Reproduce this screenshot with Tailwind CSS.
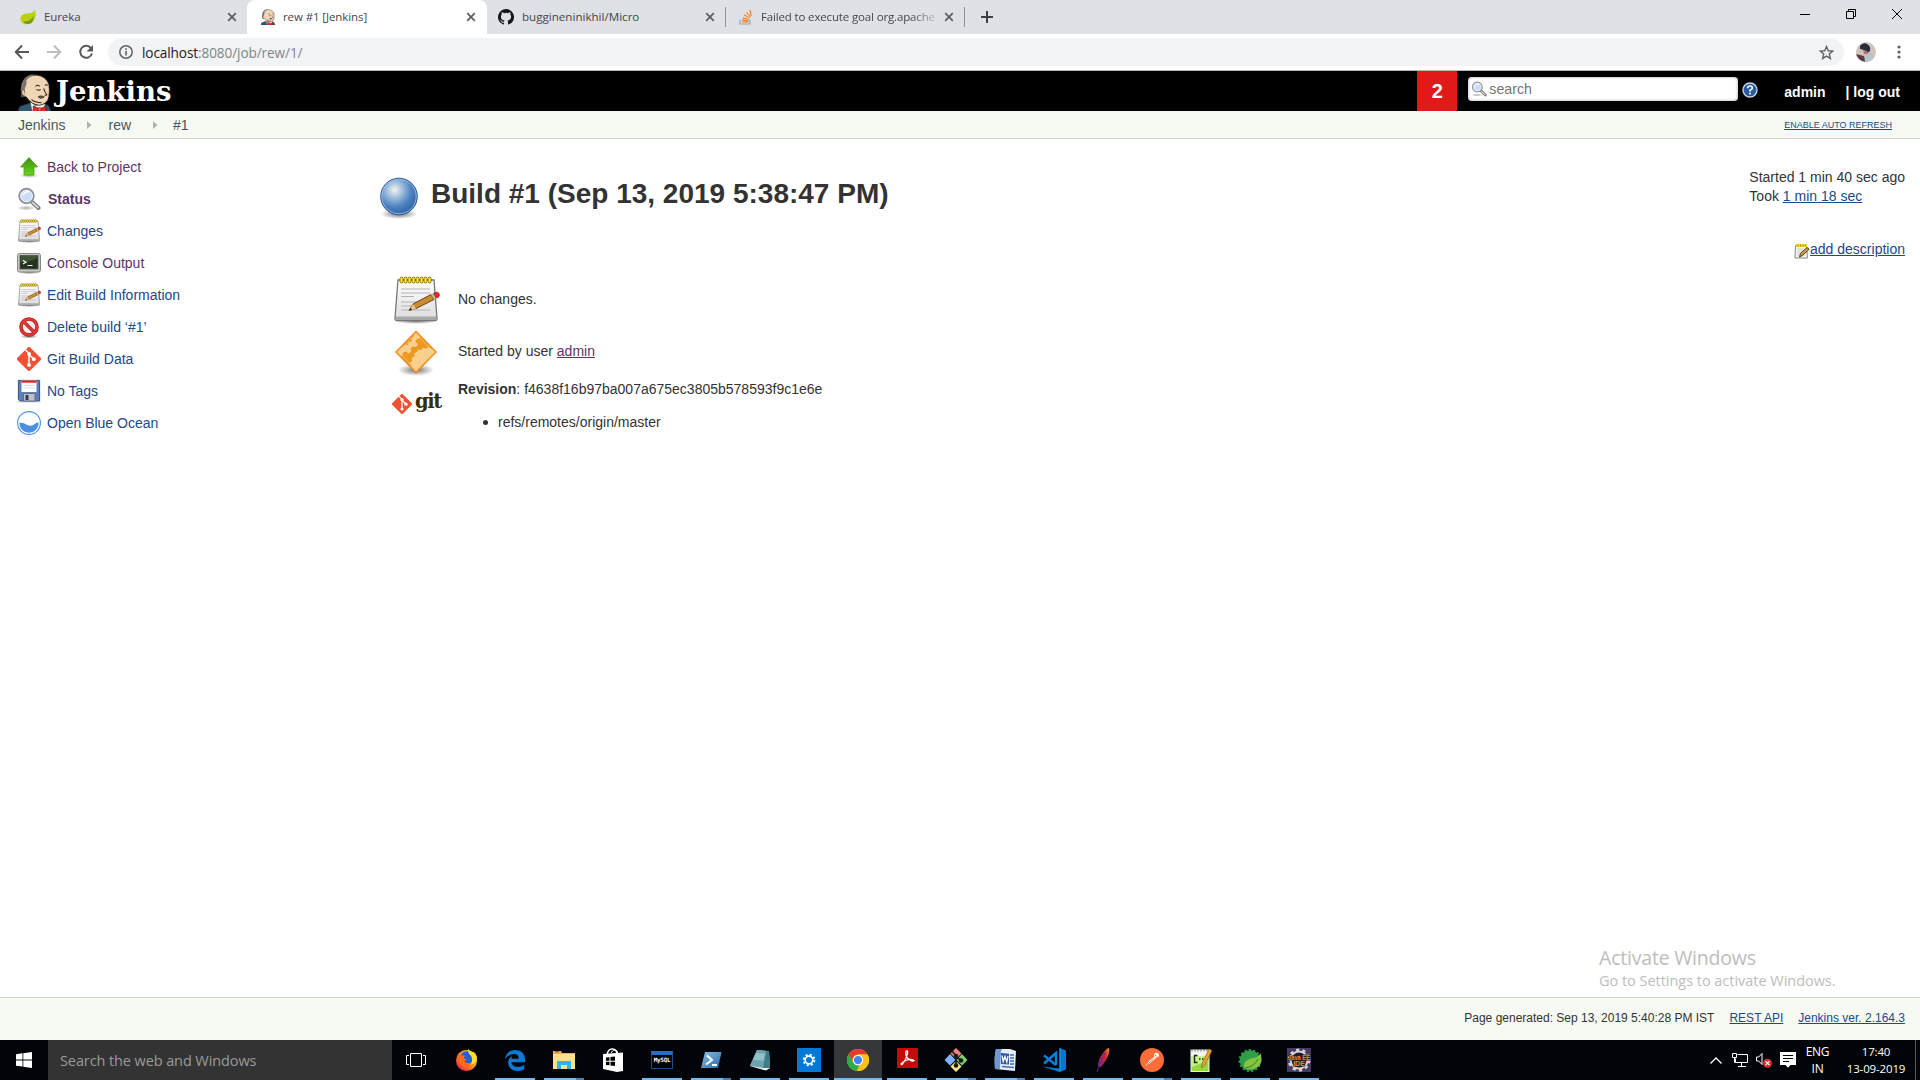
<!DOCTYPE html>
<html lang="en">
<head>
<meta charset="utf-8">
<title>rew #1 [Jenkins]</title>
<script src="https://cdn.jsdelivr.net/npm/@tailwindcss/browser@4"></script>
</head>
<body class="w-[1920px] h-[1080px] overflow-hidden bg-white flex flex-col font-['Liberation_Sans',sans-serif] text-sm text-[#333] relative">

<svg class="absolute w-0 h-0">
  <defs>
    <linearGradient id="gGreen" x1="0" y1="0" x2="0" y2="1"><stop offset="0" stop-color="#3f8f12"/><stop offset="1" stop-color="#66d416"/></linearGradient>
    <linearGradient id="gPaper" x1="0" y1="0" x2="0" y2="1"><stop offset="0" stop-color="#fff"/><stop offset="1" stop-color="#dcdcdc"/></linearGradient>
    <radialGradient id="gBall" cx=".38" cy=".32" r=".75"><stop offset="0" stop-color="#f4f5e6"/><stop offset=".2" stop-color="#b9cee4"/><stop offset=".6" stop-color="#4f85c2"/><stop offset="1" stop-color="#2a5a9c"/></radialGradient>
    <radialGradient id="gShade"><stop offset="0" stop-color="#000" stop-opacity=".55"/><stop offset="1" stop-color="#000" stop-opacity="0"/></radialGradient>
    <linearGradient id="gFox" x1="1" y1="0" x2="0" y2="1"><stop offset="0" stop-color="#fff04a"/><stop offset=".45" stop-color="#ff9518"/><stop offset=".8" stop-color="#ff3a3c"/><stop offset="1" stop-color="#e31587"/></linearGradient>
    <linearGradient id="gPs" x1="0" y1="0" x2="1" y2="1"><stop offset="0" stop-color="#8cc0e4"/><stop offset="1" stop-color="#2467a5"/></linearGradient>
    <linearGradient id="gFeather" x1="1" y1="0" x2="0" y2="1"><stop offset="0" stop-color="#f99322"/><stop offset=".4" stop-color="#d32438"/><stop offset="1" stop-color="#6d2a86"/></linearGradient>
  </defs>
  <symbol id="x" viewBox="0 0 10 10"><path d="M1.2 1.2l7.6 7.6M8.8 1.2L1.2 8.8" stroke="#5a5e62" stroke-width="1.7" fill="none"/></symbol>
  <symbol id="note" viewBox="0 0 48 48">
    <ellipse cx="24" cy="45" rx="22" ry="3" fill="url(#gShade)"/>
    <path d="M6 4h36l3 38.5q0 2-2 2H5q-2 0-2-2z" fill="url(#gPaper)" stroke="#777" stroke-width="1.3"/>
    <path d="M4 40.5h40l.4 3.5H3.6z" fill="#a9a9a9"/>
    <path d="M9 13h29M9 17h29M9 20.500h13M9 26h24M9 30h18M9 34h29" stroke="#b4b4b4" stroke-width="1.200"/>
    <g fill="#ffe83c" stroke="#8b7500" stroke-width="1"><rect x="8" y="1" width="3" height="6" rx="1.500"/><rect x="12" y="1" width="3" height="6" rx="1.500"/><rect x="16" y="1" width="3" height="6" rx="1.500"/><rect x="20" y="1" width="3" height="6" rx="1.500"/><rect x="24" y="1" width="3" height="6" rx="1.500"/><rect x="28" y="1" width="3" height="6" rx="1.500"/><rect x="32" y="1" width="3" height="6" rx="1.500"/><rect x="36" y="1" width="3" height="6" rx="1.500"/></g>
    <path d="M17 34.500l4-6.500 18-9.500 3 5-18 9z" fill="#c98c32" stroke="#6f4205" stroke-width="1"/>
    <path d="M17 34.500l4-6.500 3 5z" fill="#e8c890"/><path d="M17 34.500l1.700-2.700 1.300 2z" fill="#222"/>
    <path d="M39 18.500l2.500-1.200 3 5-2.500 1.200z" fill="#b5b5a9"/><path d="M41.500 17.300q4.500-2.500 5.700.5t-2.700 4.500z" fill="#ef2929" stroke="#a40000" stroke-width=".6"/>
  </symbol>
  <symbol id="gitmark" viewBox="0 0 24 24"><path d="M10.800.5a1.700 1.700 0 012.400 0l10.300 10.300a1.700 1.700 0 010 2.400L13.200 23.500a1.700 1.700 0 01-2.400 0L.5 13.200a1.700 1.700 0 010-2.400z" fill="#f05133"/><path d="M8.500 2.800L12 6.500V18M12 7.200l4.500 4.800" stroke="#fff" stroke-width="1.500" fill="none"/><circle cx="12" cy="6.800" r="1.900" fill="#fff"/><circle cx="12" cy="18" r="1.900" fill="#fff"/><circle cx="16.800" cy="12.200" r="1.900" fill="#fff"/></symbol>
  <symbol id="butler" viewBox="0 0 32 37">
    <path d="M0 37q0-6 5-6.500l9-3 13 2q4 1 5 7.500z" fill="#34586e" stroke="#1b2b35" stroke-width="1"/>
    <path d="M12 27l5 4 9-2-1 8H14z" fill="#f3f1ee"/>
    <path d="M4 22Q1 15 5 7 10 1 18 1q9 1 12 9 1 6 0 12-1 7-9 8.500-8-.5-13-8z" fill="#f0d6b7" stroke="#302018" stroke-width=".8"/>
    <path d="M17 .5Q9-.5 5 6 2 11 3.500 17l-.5 6 4-3-.5-6Q9 10 8 6q4-4 9-5.500z" fill="#7b7471"/>
    <path d="M5 15q-2.500 1-1.500 4t4 3" fill="#edc9a4" stroke="#302018" stroke-width=".8"/>
    <path d="M17 12q2-2 4 0M26 11q2-1 3 0M18 15q2 1.500 4 0M25 14q1 4 3 6-1 1-2 .5M13 25q4 3 10 3" fill="none" stroke="#302018" stroke-width="1"/>
    <path d="M19 22q3-2 7 0-1 2-2.500 1.500-3 1.500-4.500-1.500z" fill="#5a4a42"/>
    <path d="M15 31l6 3 6-2.500.5 5.500H14.500z" fill="#e12a2a" stroke="#7a0d10" stroke-width=".7"/><circle cx="21" cy="34.500" r="1.800" fill="#f55" stroke="#7a0d10" stroke-width=".6"/>
  </symbol>
  <symbol id="lens" viewBox="0 0 24 24"><ellipse cx="9" cy="21" rx="9" ry="2.500" fill="url(#gShade)" opacity=".6"/><path d="M14 14l7.500 7" stroke="#777" stroke-width="4" stroke-linecap="round"/><path d="M15.500 15.500l5.500 5" stroke="#d6d6d6" stroke-width="1.800" stroke-linecap="round"/><circle cx="9.500" cy="9" r="7.200" fill="#bcd6f2" stroke="#8f9296" stroke-width="2"/><circle cx="9.500" cy="9" r="5.800" fill="#c9def5" stroke="#eef5fc" stroke-width="1"/><path d="M6 8q2-4 6-3" stroke="#fff" stroke-width="1.500" fill="none"/></symbol>
</svg>

<!-- Browser tab strip -->
<div class="h-[34px] shrink-0 bg-[#dee1e6] flex items-stretch font-['Open_Sans',sans-serif] text-[#44474b]">
  <div class="w-[247px] pl-5 pr-[10px] flex items-center">
    <svg class="w-4 h-4" viewBox="0 0 16 16"><path d="M15 1q2 7-1.500 11T4 15Q0 13 .5 9T6 4.500Q12 5 15 1z" fill="#bccf10"/><path d="M3 12.500Q10 13 13.500 7q.5 7-5 8-3.500.5-5.500-2.500z" fill="#7c9a10"/></svg>
    <span class="ml-2 flex-1 text-[11.5px] tracking-[-0.1px]">Eureka</span>
    <svg class="w-[10px] h-[10px]"><use href="#x"/></svg>
  </div>
  <div class="w-[240px] pl-[13px] pr-[11px] flex items-center bg-white rounded-t-lg">
    <svg class="w-4 h-4"><use href="#butler"/></svg>
    <span class="ml-[7px] flex-1 text-[11.5px] tracking-[-0.1px]">rew #1 [Jenkins]</span>
    <svg class="w-[10px] h-[10px]"><use href="#x"/></svg>
  </div>
  <div class="w-[238px] pl-[11px] pr-[10px] flex items-center">
    <svg class="w-4 h-4" viewBox="0 0 16 16" fill="#15171a"><path d="M8 0a8 8 0 00-2.530 15.590c.4.070.55-.170.550-.380v-1.490c-2.230.480-2.700-.950-2.700-.950-.360-.920-.890-1.170-.890-1.170-.730-.5.060-.490.060-.490.800.06 1.230.830 1.230.830.710 1.220 1.870.870 2.330.660.070-.520.280-.870.510-1.070-1.780-.2-3.640-.890-3.640-3.950 0-.870.310-1.590.820-2.150-.080-.2-.360-1.020.080-2.120 0 0 .670-.220 2.200.820a7.700 7.700 0 014 0c1.530-1.040 2.200-.820 2.200-.820.440 1.100.160 1.920.080 2.120.510.560.820 1.270.820 2.150 0 3.070-1.870 3.750-3.650 3.950.290.250.540.730.540 1.480v2.200c0 .210.150.460.550.380A8 8 0 008 0z"/></svg>
    <span class="ml-2 flex-1 text-[11.6px]">buggineninikhil/Micro</span>
    <svg class="w-[10px] h-[10px]"><use href="#x"/></svg>
  </div>
  <div class="w-px h-5 bg-[#8d9094] self-center"></div>
  <div class="w-[238px] pl-3 pr-[10px] flex items-center">
    <svg class="w-4 h-4" viewBox="0 0 16 16" fill="none"><path d="M2 10.500V15h10v-4.500" stroke="#9aa4ae" stroke-width="1.200"/><path d="M4 13h6.500M4 11.200l6.500.6M4.600 8.800l6.200 1.700M6 5.700l5.500 3.200M8.500 3l4 5M11.800.8l1.500 6" stroke="#f48024" stroke-width="1.200"/></svg>
    <span class="ml-[7px] whitespace-nowrap text-[11.5px] tracking-[-0.15px] [mask-image:linear-gradient(to_right,black_86%,transparent_104%)]">Failed to execute goal org.apache</span>
    <svg class="w-[10px] h-[10px] ml-auto shrink-0"><use href="#x"/></svg>
  </div>
  <div class="w-px h-5 bg-[#8d9094] self-center"></div>
  <div class="flex-1 flex items-center pl-4">
    <svg class="w-3 h-3" viewBox="0 0 12 12"><path d="M6 0v12M0 6h12" stroke="#3c4043" stroke-width="2"/></svg>
  </div>
  <div class="flex items-start gap-9 pt-[9px] pr-[18px]">
    <svg class="w-[10px] h-[10px]" viewBox="0 0 10 10"><path d="M0 5.500h10" stroke="#000"/></svg>
    <svg class="w-[10px] h-[10px]" viewBox="0 0 10 10" fill="none" stroke="#000"><path d="M.5 2.500h7v7h-7zM2.500 2.500v-2h7v7h-2"/></svg>
    <svg class="w-[10px] h-[10px]" viewBox="0 0 10 10"><path d="M0 0l10 10M10 0L0 10" stroke="#000"/></svg>
  </div>
</div>

<!-- Browser toolbar -->
<div class="h-9 shrink-0 flex items-center pl-[14px] pr-[17px] font-['Open_Sans',sans-serif]">
  <svg class="w-4 h-4" viewBox="0 0 16 16" fill="none" stroke="#55595d" stroke-width="2"><path d="M15 8H2M8 1.500L1.800 8 8 14.500"/></svg>
  <svg class="w-4 h-4 ml-4" viewBox="0 0 16 16" fill="none" stroke="#bcbec0" stroke-width="2"><path d="M1 8h13M8 1.500L14.200 8 8 14.500"/></svg>
  <svg class="w-4 h-4 ml-4" viewBox="0 0 16 16"><path d="M13.300 4.500A6 6 0 1014 9.500" fill="none" stroke="#55595d" stroke-width="2"/><path d="M15 1v6.500H8.500z" fill="#55595d"/></svg>
  <div class="ml-[14px] w-[1736px] h-7 rounded-full bg-[#f1f3f4] flex items-center pl-[11px] pr-[10px]">
    <svg class="w-[14px] h-[14px]" viewBox="0 0 14 14"><circle cx="7" cy="7" r="6.200" fill="none" stroke="#5f6368" stroke-width="1.500"/><path d="M7 6v4.500M7 3.300v1.600" stroke="#5f6368" stroke-width="1.600"/></svg>
    <span class="ml-[9px] mt-px flex-1 text-[13.6px] tracking-[-0.1px] text-[#80868b]"><span class="text-[#202124]">localhost</span>:8080/job/rew/1/</span>
    <svg class="w-[15px] h-[15px]" viewBox="0 0 24 24" fill="none" stroke="#5f6368" stroke-width="2.200"><path d="M12 2.500l2.800 6.700 7.200.6-5.500 4.700 1.700 7L12 17.700 5.800 21.500l1.700-7L2 9.800l7.200-.6z"/></svg>
  </div>
  <svg class="w-5 h-5 ml-3" viewBox="0 0 20 20"><clipPath id="av"><circle cx="10" cy="10" r="10"/></clipPath><g clip-path="url(#av)"><path d="M0 0h20v20H0z" fill="#cfc4bb"/><path d="M0 12l8 2 4 6H0z" fill="#5e3c44"/><path d="M8 12q2-3 6-3 4 3 3 11H9z" fill="#b9c3c8"/><path d="M4 4q3-4 7-2 4 2 3 7l-3 2-3-3-4-1z" fill="#2a2b3f"/><path d="M7 8l4 1 1 3-4 0z" fill="#b0746c"/></g></svg>
  <svg class="w-1 h-[14px] ml-[21px]" viewBox="0 0 4 14" fill="#5f6368"><circle cx="2" cy="2" r="1.600"/><circle cx="2" cy="7" r="1.600"/><circle cx="2" cy="12" r="1.600"/></svg>
</div>

<!-- Jenkins header -->
<div class="h-[41px] shrink-0 bg-black border-t border-[#b6bcb6] flex">
  <div class="flex pl-[18px] flex-1">
    <svg class="w-[33px] h-[38px] mt-[3px]"><use href="#butler"/></svg>
    <span class="ml-[5px] mt-px text-[27.5px] leading-[38px] font-bold text-white font-['DejaVu_Serif',serif]">Jenkins</span>
  </div>
  <div class="w-10 bg-[#e11919] text-white font-bold text-xl flex items-center justify-center">2</div>
  <div class="ml-[11px] mt-[6px] w-[270px] h-6 rounded bg-white shadow-[inset_0_0_3px_#999] flex items-center pl-[3px]">
    <svg class="w-4 h-4"><use href="#lens"/></svg>
    <span class="ml-[2px] text-[#757575] text-[14.2px]">search</span>
  </div>
  <svg class="w-4 h-4 ml-1 mt-[11px]" viewBox="0 0 16 16"><circle cx="8" cy="8" r="7" fill="#2c5aa0" stroke="#c5d5e8" stroke-width="1.400"/><path d="M5.600 6.200Q5.800 4 8 4t2.300 2Q10.300 7.300 8 8.300v1.200" stroke="#fff" stroke-width="1.600" fill="none"/><circle cx="8" cy="11.600" r="1" fill="#fff"/></svg>
  <div class="ml-[26px] mt-[2px] flex items-center text-white font-bold text-sm pr-5 whitespace-nowrap">
    <span>admin</span><span class="ml-5">| log out</span>
  </div>
</div>

<!-- Breadcrumbs -->
<div class="h-7 shrink-0 bg-[#f6faf2] border-b border-[#d3d7cf] flex items-center pl-[18px] pr-[28px] text-[#4d545d] text-sm">
  <span>Jenkins</span>
  <svg class="w-[5px] h-2 ml-[22px]" viewBox="0 0 5 8"><path d="M0 0l4.500 4L0 8z" fill="#b0b3b0"/></svg>
  <span class="ml-4">rew</span>
  <svg class="w-[5px] h-2 ml-[22px]" viewBox="0 0 5 8"><path d="M0 0l4.500 4L0 8z" fill="#b0b3b0"/></svg>
  <span class="ml-[15px]">#1</span>
  <a class="ml-auto mt-px text-[9px] underline text-[#204a87]">ENABLE AUTO REFRESH</a>
</div>

<!-- Page body -->
<div class="h-[858px] shrink-0 flex">
  <nav class="w-[380px] pl-[17px] pt-3 flex flex-col text-[#204a87]">
    <a class="h-8 flex items-center gap-[6px] text-[#5c3566]"><svg class="w-6 h-6" viewBox="0 0 24 24"><ellipse cx="12" cy="20.500" rx="10" ry="2.500" fill="url(#gShade)" opacity=".6"/><path d="M12 2.500l8.500 9.500H17v8H7v-8H3.500z" fill="url(#gGreen)" stroke="#4c9a22" stroke-width=".8"/></svg>Back to Project</a>
    <a class="h-8 flex items-center gap-[7px] text-[#5c3566] font-bold"><svg class="w-6 h-6"><use href="#lens"/></svg>Status</a>
    <a class="h-8 flex items-center gap-[6px]"><svg class="w-6 h-6"><use href="#note"/></svg>Changes</a>
    <a class="h-8 flex items-center gap-[6px] text-[#5c3566]"><svg class="w-6 h-6" viewBox="0 0 24 24"><ellipse cx="12" cy="21" rx="11" ry="2.500" fill="url(#gShade)"/><rect x=".5" y="2.500" width="23" height="18.500" rx="2" fill="#c4c7c0" stroke="#888a85"/><rect x="3" y="4.500" width="18" height="13.500" fill="#24331f" stroke="#555" stroke-width=".8"/><path d="M3.500 11q8 1 17-4V5h-17z" fill="#3f5536"/><path d="M6 9.500l3 1.700-3 1.700M10.500 14.500h5" stroke="#fff" stroke-width="1.100" fill="none"/></svg>Console Output</a>
    <a class="h-8 flex items-center gap-[6px]"><svg class="w-6 h-6"><use href="#note"/></svg>Edit Build Information</a>
    <a class="h-8 flex items-center gap-[6px]"><svg class="w-6 h-6" viewBox="0 0 24 24"><ellipse cx="12" cy="21.500" rx="9" ry="2" fill="url(#gShade)"/><circle cx="12" cy="12" r="8" fill="#f7eeee" stroke="#b91a1a" stroke-width="3.600"/><path d="M6.500 6.500l11 11" stroke="#b91a1a" stroke-width="3.200"/><circle cx="12" cy="12" r="8" fill="none" stroke="#dd3a3a" stroke-width="2.200"/><path d="M6.500 6.500l11 11" stroke="#dd3a3a" stroke-width="2"/></svg>Delete build ‘#1’</a>
    <a class="h-8 flex items-center gap-[6px]"><svg class="w-6 h-6"><use href="#gitmark"/></svg>Git Build Data</a>
    <a class="h-8 flex items-center gap-[6px]"><svg class="w-6 h-6" viewBox="0 0 24 24"><path d="M0 0h24v24H0z" fill="#ebebed"/><path d="M1.500 1.500h21v20.500H3L1.500 20.500z" fill="#5b82bd" stroke="#3a5a8c"/><path d="M4.500 1.500h15v11.500h-15z" fill="#fff"/><path d="M4.500 1.500h15v2.200h-15z" fill="#e02020"/><path d="M6 6.500h12M6 9h12" stroke="#dde"/><path d="M6.500 14.500H18V22H6.500z" fill="#bfc1c4" stroke="#4a5a72" stroke-width=".7"/><path d="M8.500 16h3v5h-3z" fill="#333c4c"/></svg>No Tags</a>
    <a class="h-8 flex items-center gap-[6px]"><svg class="w-6 h-6" viewBox="0 0 24 24"><circle cx="12" cy="12" r="11.400" fill="#fff" stroke="#4a90e2" stroke-width="1.100"/><path d="M2.300 11.500q5 0 8 2.500 4 2 8-1.500 1.500-1 3.400-1A9.700 9.700 0 0112 21.700 9.700 9.700 0 012.300 11.500z" fill="#4a90e2"/></svg>Open Blue Ocean</a>
  </nav>

  <main class="flex-1 pt-[35px]">
    <h1 class="flex items-center h-10 text-[28px] font-bold leading-10 whitespace-nowrap">
      <svg class="w-[38px] h-[42px] mt-2 shrink-0" viewBox="0 0 38 42"><ellipse cx="19" cy="37" rx="18.500" ry="5" fill="url(#gShade)"/><circle cx="19" cy="19.500" r="18.300" fill="url(#gBall)" stroke="#2d5a9a"/><circle cx="19" cy="19.500" r="17.200" fill="none" stroke="#9dbce0" stroke-width=".9"/></svg>
      <span class="ml-[13px]">Build #1 (Sep 13, 2019 5:38:47 PM)</span>
    </h1>
    <div class="mt-[59px] flex flex-col pl-3">
      <div class="h-[52px] flex items-center">
        <svg class="w-12 h-12 mt-px"><use href="#note"/></svg>
        <span class="ml-[18px]">No changes.</span>
      </div>
      <div class="h-[52px] flex items-center">
        <svg class="w-12 h-12 mt-px" viewBox="0 0 48 48"><clipPath id="dia"><path d="M24 3.500L44 24 24 44.500 4 24z"/></clipPath><ellipse cx="24" cy="42" rx="18" ry="6" fill="url(#gShade)"/><path d="M24 3.500L44 24 24 44.500 4 24z" fill="#fbcf8c"/><g clip-path="url(#dia)"><path d="M0 0h24l.5 4.500-3 1 .5 3.500-2.500 1 .2 3.500-3 .3-.8 3.200-3-.5-2 2.500-2.500-1.500L0 21z" fill="#e8951c"/><path d="M26 0l-.5 6 3 1.500-.5 3-3.500.5-1 3 2.500 2.300-2 2.700-3-.8-2.500 2.300.8 3-2.800 2-2.500-2-3 1-.5 3.200-3 .5L6 26l-4-1v2l14 12 3-1.500-1-3 2.200-1.500-.5-3.300 2.800-1.200-.3-3 3-1.500.8-2.500 3.500.5 1.500-2.500 3 1.200 2.500-2 2.500 2 3-.8L46 24V0z" fill="#ec9a24"/></g><path d="M24 3.500L44 24 24 44.500 4 24z" fill="none" stroke="#f0881c" stroke-width="1.400"/><path d="M24 5.500L42 24 24 42.500 6 24z" fill="none" stroke="#fdc77e" stroke-width=".7"/></svg>
        <span class="ml-[18px]">Started by user <a class="text-[#5c3566] underline">admin</a></span>
      </div>
      <div class="flex">
        <div class="w-12 pt-[14px] flex items-center h-10 font-['DejaVu_Serif',serif]">
          <svg class="w-5 h-5 shrink-0"><use href="#gitmark"/></svg><span class="ml-[3px] -mt-1 text-[19.5px] leading-5 font-bold text-[#3a2d08] tracking-[-1.4px]">git</span>
        </div>
        <div class="ml-[18px] pt-[2px] leading-5">
          <p><b>Revision</b>: f4638f16b97ba007a675ec3805b578593f9c1e6e</p>
          <ul class="mt-[13px] pl-[25px]"><li class="flex items-center"><span class="w-[5px] h-[5px] rounded-full bg-[#333] mr-[10px]"></span>refs/remotes/origin/master</li></ul>
        </div>
      </div>
    </div>
  </main>

  <aside class="w-[200px] pr-[15px] pt-[29px] flex flex-col items-end leading-[19px] whitespace-nowrap">
    <div><p>Started 1 min 40 sec ago</p><p>Took <a class="underline text-[#204a87]">1 min 18 sec</a></p></div>
    <a class="mt-[34px] flex items-center text-[#204a87] underline"><svg class="w-4 h-4 mt-[3px]" viewBox="0 0 16 16"><path d="M1.500 2.500h11l1 12.500H1z" fill="#f2f2ef" stroke="#8a8c88"/><path d="M3.500 6h7M3.500 8h7M3.500 10h4M3.500 12h7" stroke="#c4c4c4" stroke-width=".8"/><path d="M2 1h11v3H2z" fill="#f0d830"/><path d="M4 1v3M6.500 1v3M9 1v3M11.500 1v3" stroke="#a88c10" stroke-width=".7"/><path d="M5.500 14l1-3.500 6.500-6 2.200 1.800-6.500 6z" fill="#c99a48" stroke="#4a3208" stroke-width=".9"/></svg>add description</a>
  </aside>
</div>

<!-- Page footer -->
<footer class="h-[43px] shrink-0 bg-[#f6faf2] border-t border-[#d3d7cf] flex items-center justify-end gap-[15px] pr-[15px] pb-[2px] text-xs">
  <span>Page generated: Sep 13, 2019 5:40:28 PM IST</span>
  <a class="underline text-[#204a87]">REST API</a>
  <a class="underline text-[#204a87]">Jenkins ver. 2.164.3</a>
</footer>

<!-- Windows taskbar -->
<div class="h-10 shrink-0 bg-[#010409] flex font-['Open_Sans',sans-serif]">
  <div class="w-12 flex items-center justify-center"><svg class="w-4 h-4" viewBox="0 0 16 16" fill="#fff"><path d="M0 2.200l6.500-.9v6.200H0zM7.300 1.200L16 0v7.500H7.300zM0 8.400h6.500v6.200L0 13.700zM7.300 8.400H16V16l-8.700-1.200z"/></svg></div>
  <div class="w-[344px] bg-[#333] text-[#9a9a9a] text-[14.500px] tracking-[-0.1px] flex items-center pl-3 pt-[2px]">Search the web and Windows</div>
  <div class="w-12 flex items-center justify-center mr-[2px]"><svg class="w-5 h-[14px]" viewBox="0 0 20 14" fill="none" stroke="#fff"><path d="M4.500.5h11v13h-11zM3 2.500H.5v9H3M17 2.500h2.500v9H17"/></svg></div>

  <div class="flex gap-px">
  <div class="w-12 flex items-center justify-center"><svg class="w-[23px] h-6" viewBox="0 0 24 24"><circle cx="12" cy="12.500" r="11" fill="url(#gFox)"/><path d="M7 5q3-3 8-2 5 3 3.500 9-1.500 5-6.500 5-5-1-6-7z" fill="#1a62d6"/><path d="M3 5l4 2.500 3-.5-.5 3.500 3 1-3 2 3 1.500q3 .5 5-1-1.500 5-7 5.500-6-1.500-8-8z" fill="#ff6a1c"/><path d="M14 0q-1 5 3 8 2 5-1 9 6-1 7-8-1-4-4-6l-1 1q-3-1-4-4z" fill="#ffe030"/></svg></div>
  <div class="w-12 flex items-center justify-center relative"><svg class="w-[22px] h-[22px]" viewBox="0 0 24 24"><path d="M1 11Q3 1 12.500 1 23 1.500 23 12v2.500H8q1 5 7 5 4 0 7-2v4.500q-3 2-8 2-9-1-9.500-9Q4.500 10 9 7.500 8 9 8 10.500h8q0-5-5-5Q5 5.500 1 11z" fill="#0a7ad8"/></svg><i class="absolute bottom-0 w-10 h-0.5 bg-[#76b9ed]"></i></div>
  <div class="w-12 flex items-center justify-center relative"><svg class="w-[22px] h-5" viewBox="0 0 22 20"><path d="M0 1h8l1 2h13v16H0z" fill="#e8b64c"/><path d="M0 4h22v15H0z" fill="#ffe08a"/><path d="M4 19v-8h14v8h-4v-4H8v4z" fill="#2eb4ee"/><path d="M2 1h4v1.500H2z" fill="#a86a10"/></svg><i class="absolute bottom-0 w-10 h-0.5 bg-[#76b9ed] border-r-8 border-[#4f80ad]"></i></div>
  <div class="w-12 flex items-center justify-center"><svg class="w-[22px] h-6" viewBox="0 0 22 24"><path d="M5 7q1-6 5-6t5 4" fill="none" stroke="#fff" stroke-width="1.500"/><path d="M9 5q3-5 6-2l1 3" fill="none" stroke="#fff"/><path d="M1 6l20-1.500V23l-6 1L1 21z" fill="#fff"/><path d="M4 9.500l3.500-.3v3.500H4zM8.500 9l4.500-.4v4.100H8.500zM4 13.800h3.500v3.500L4 17zM8.500 13.800H13v4.200l-4.500-.5z" fill="#000"/></svg></div>
  <div class="w-12 flex items-center justify-center relative"><span class="w-[22px] h-[18px] border border-[#1d4a8a] border-t-4 border-t-[#2a6cc0] bg-black text-white text-[6px] leading-[9px] text-center font-bold font-['DejaVu_Sans_Mono',monospace] tracking-[-0.3px]">MySQL</span><i class="absolute bottom-0 w-10 h-0.5 bg-[#76b9ed]"></i></div>
  <div class="w-12 flex items-center justify-center relative"><svg class="w-[22px] h-[18px]" viewBox="0 0 22 18"><path d="M5 1h16.500L18 17H1z" fill="url(#gPs)"/><path d="M7 4.500l5 4.500-6 4.500M12 14h5" stroke="#fff" stroke-width="2" fill="none"/></svg><i class="absolute bottom-0 w-10 h-0.5 bg-[#76b9ed] border-r-8 border-[#4f80ad]"></i></div>
  <div class="w-12 flex items-center justify-center relative"><svg class="w-6 h-6" viewBox="0 0 24 24"><path d="M9 2l12 1 1 17-5 2L2 18z" fill="#a9ccd4"/><path d="M9 2l9 1-3 17L2 18z" fill="#6da3ad"/><path d="M8 5l9 .5-1.500 7L5 12z" fill="#93c1c9"/><path d="M18 3l-3 17 7 0-1-17z" fill="#3a7c88"/><path d="M2 18l13 2 7 0-4 2.500z" fill="#eee"/></svg><i class="absolute bottom-0 w-10 h-0.5 bg-[#76b9ed]"></i></div>
  <div class="w-12 flex items-center justify-center relative"><svg class="w-6 h-6" viewBox="0 0 24 24"><path d="M0 0h24v24H0z" fill="#0078d7"/><circle cx="12" cy="12" r="3.800" fill="none" stroke="#fff" stroke-width="1.700"/><circle cx="12" cy="12" r="5.300" fill="none" stroke="#fff" stroke-width="2" stroke-dasharray="2.080 2.080"/></svg><i class="absolute bottom-0 w-10 h-0.5 bg-[#76b9ed]"></i></div>
  <div class="w-12 bg-[#35383b] flex items-center justify-center relative"><svg class="w-[22px] h-[22px]" viewBox="0 0 24 24"><circle cx="12" cy="12" r="12" fill="#fbc116"/><path d="M1.600 6A12 12 0 0122.400 6H12a6 6 0 00-5.200 9z" fill="#e33b2e"/><path d="M1.600 6l5.200 9A6 6 0 0012 18l1.500-.2L10.500 24A12 12 0 011.600 6z" fill="#2da94f"/><path d="M22.400 6H12l5.200 3v6l-5.200 9A12 12 0 0022.400 6z" fill="#fbc116"/><circle cx="12" cy="12" r="5.600" fill="#fff"/><circle cx="12" cy="12" r="4.500" fill="#4285f4"/></svg><i class="absolute bottom-0 w-12 h-0.5 bg-[#76b9ed]"></i></div>
  <div class="w-12 flex items-center justify-center relative"><svg class="w-[21px] h-5 -mt-1" viewBox="0 0 21 20"><path d="M0 0h21v20H0z" fill="#c50a0a"/><path d="M4 16q2.500-3 6-4 4-1.500 7 .5-2 2-6-2-3-3-2-7 2-2 1.500 2Q9.500 11 5.500 16 4.500 17 4 16z" fill="none" stroke="#fff" stroke-width="1.300"/></svg><i class="absolute bottom-0 w-10 h-0.5 bg-[#76b9ed]"></i></div>
  <div class="w-12 flex items-center justify-center relative"><svg class="w-6 h-6" viewBox="0 0 24 24"><path d="M12 0l5.500 5.500L12 11 6.500 5.500z" fill="#f58080"/><path d="M6 6l5.500 6L6 17.500.5 12z" fill="#80b3ff"/><path d="M18 6l5.500 6L18 17.500 12.500 12z" fill="#80d06a"/><path d="M12 13l5.500 5.500L12 24l-5.500-5.500z" fill="#ffe680"/><path d="M8 3l4 5v10M12 9l5 3" stroke="#1a1a1a" stroke-width="1.700" fill="none"/><circle cx="12" cy="8" r="2.300" fill="#1a1a1a"/><circle cx="12" cy="17.500" r="2.300" fill="#1a1a1a"/><circle cx="17" cy="12.500" r="2.300" fill="#1a1a1a"/></svg><i class="absolute bottom-0 w-10 h-0.5 bg-[#76b9ed] border-r-8 border-[#4f80ad]"></i></div>
  <div class="w-12 flex items-center justify-center relative"><svg class="w-6 h-6" viewBox="0 0 24 24"><path d="M3 1h14l6 2-1 20-20-2Q1 8 3 1z" fill="#e4edf8"/><path d="M3 1h6L8 3 7 21H2Q1 8 3 1z" fill="#7097d0"/><path d="M8 5l8 .7v10.700L8 16z" fill="#2b579a"/><path d="M9 7.500l1.200 6 1.800-5 1.800 5.500 1.200-6" stroke="#fff" stroke-width="1.300" fill="none"/><path d="M17 7h4M17 10h4M17 13h4M17 16h4M9 18.500l12 1" stroke="#3f6db5" stroke-width="1.400"/></svg><i class="absolute bottom-0 w-10 h-0.5 bg-[#76b9ed] border-r-8 border-[#4f80ad]"></i></div>
  <div class="w-12 flex items-center justify-center relative"><svg class="w-6 h-6" viewBox="0 0 24 24"><path d="M17.500 0L24 2.500v19L17.500 24 0 18.500l17.500 2z" fill="#0078d0"/><path d="M2 7.500L14 17M2 15.500L14 5v12" stroke="#0a80d8" stroke-width="2.400" fill="none"/><path d="M17.500 0v24l1-.4V.4z" fill="#29a0ee"/></svg><i class="absolute bottom-0 w-10 h-0.5 bg-[#76b9ed]"></i></div>
  <div class="w-12 flex items-center justify-center relative"><svg class="w-6 h-6" viewBox="0 0 24 24"><path d="M17 0q2-.5 1 5-2 7-8 14H7q0-7 3-11 3-5 7-8z" fill="url(#gFeather)"/><path d="M15 4Q9 12 6 24" stroke="#5b2a80" fill="none"/></svg><i class="absolute bottom-0 w-10 h-0.5 bg-[#76b9ed]"></i></div>
  <div class="w-12 flex items-center justify-center relative"><svg class="w-6 h-6" viewBox="0 0 24 24"><circle cx="12" cy="12" r="12" fill="#ff6c37"/><path d="M5 18.500l4-5.500 5.500-4.500 1.500 1.500-5.500 5z" fill="#fff"/><path d="M6.500 17.500l7-6.500" stroke="#d8562a" stroke-width=".8"/><circle cx="16.500" cy="7.200" r="2.400" fill="#fff"/><path d="M15 7l2 1.500" stroke="#ff6c37"/></svg><i class="absolute bottom-0 w-10 h-0.5 bg-[#76b9ed] border-r-8 border-[#4f80ad]"></i></div>
  <div class="w-12 flex items-center justify-center relative"><svg class="w-6 h-6" viewBox="0 0 24 24"><path d="M1.500 1.500h19V24h-19z" fill="#f5f5ef"/><path d="M2.500 8h17v15h-17z" fill="#8fdc3c"/><path d="M2.500 8h17v6q-9 1-17 5z" fill="#c8f08c"/><path d="M3 1.500v2M6 1.500v2M9 1.500v2M12 1.500v2M15 1.500v2M18 1.500v2" stroke="#666"/><path d="M8.500 7.500h-3v7h3M10 11h1.500M13 11h1.500" stroke="#222" stroke-width="1.400" fill="none"/><path d="M20 1l3 1.500L16 17l-3.500 3 .5-4.500z" fill="#e8a030" stroke="#805010" stroke-width=".6"/></svg><i class="absolute bottom-0 w-10 h-0.5 bg-[#76b9ed]"></i></div>
  <div class="w-12 flex items-center justify-center relative"><svg class="w-6 h-6" viewBox="0 0 24 24"><circle cx="12" cy="12.500" r="10.300" fill="#2e9e49"/><circle cx="12" cy="12.500" r="10.600" fill="none" stroke="#2e9e49" stroke-width="1.800" stroke-dasharray="2.200 2.200"/><path d="M22.500 5q3 10-3 14-6 4-13 1-2-5 3-8 3-2 7-2 4-1 6-5z" fill="#86c440"/><path d="M7 20q9-1 13-9" stroke="#2e7d32" fill="none"/></svg><i class="absolute bottom-0 w-10 h-0.5 bg-[#76b9ed]"></i></div>
  <div class="w-12 flex items-center justify-center relative"><svg class="w-6 h-6" viewBox="0 0 24 24"><path d="M0 0h24v24H0z" fill="#453b66"/><circle cx="12" cy="12" r="8.500" fill="#231b33" stroke="#d8d6d2" stroke-width="2"/><circle cx="12" cy="12" r="10.200" fill="none" stroke="#d8d6d2" stroke-width="2.400" stroke-dasharray="3.200 3.200"/><g font-family="Liberation Sans" font-weight="bold" fill="#f08a24" stroke="#2b1a10" stroke-width="1.200" paint-order="stroke" text-anchor="middle"><text x="12" y="11.500" font-size="7" textLength="22" lengthAdjust="spacingAndGlyphs">Java EE</text><text x="12" y="18" font-size="7">IDE</text></g></svg><i class="absolute bottom-0 w-10 h-0.5 bg-[#76b9ed]"></i></div>
  </div>

  <div class="ml-auto flex items-center text-white text-xs">
    <svg class="w-3 h-[7px]" viewBox="0 0 12 7"><path d="M.5 6.500L6 1l5.500 5.500" stroke="#fff" stroke-width="1.300" fill="none"/></svg>
    <svg class="w-4 h-[14px] ml-[10px]" viewBox="0 0 16 14" fill="none" stroke="#fff"><path d="M5.500 1.500h10v8H3.500v-4M9.500 10v3M6 13.500h8M.5.500h4v4h-4zM2.500 5v4.500h1"/></svg>
    <svg class="w-4 h-4 ml-2" viewBox="0 0 16 16"><path d="M.5 5h2.200L6 1.500v11L2.700 9H.5z" fill="none" stroke="#fff"/><circle cx="11.500" cy="11.200" r="4.500" fill="#e0282e"/><path d="M9.500 9.200l4 4M13.500 9.200l-4 4" stroke="#fff" stroke-width="1.200"/></svg>
    <svg class="w-4 h-4 ml-2" viewBox="0 0 16 16"><path d="M0 0h16v13h-5.500L8 15.800 5.500 13H0z" fill="#fff"/><path d="M3 3.500h10M3 6.500h10M3 9.500h6" stroke="#000"/></svg>
    <div class="w-[43px] text-center leading-[17px] tracking-[-0.3px]">ENG<br>IN</div>
    <div class="w-[74px] text-center leading-[17px] text-[11.500px] tracking-[-0.15px] -mt-px">17:40<br>13-09-2019</div>
    <div class="w-px h-10 bg-[#55585c] ml-[2px] mr-1"></div>
  </div>
</div>

<!-- Activation watermark -->
<div class="absolute left-[1599px] top-[945px] font-['Open_Sans',sans-serif] text-[#bdbdbd] whitespace-nowrap">
  <p class="text-[19.5px] leading-[26px] tracking-[-0.2px]">Activate Windows</p>
  <p class="text-[14.500px] leading-5 tracking-[-0.03px]">Go to Settings to activate Windows.</p>
</div>
</body>
</html>
